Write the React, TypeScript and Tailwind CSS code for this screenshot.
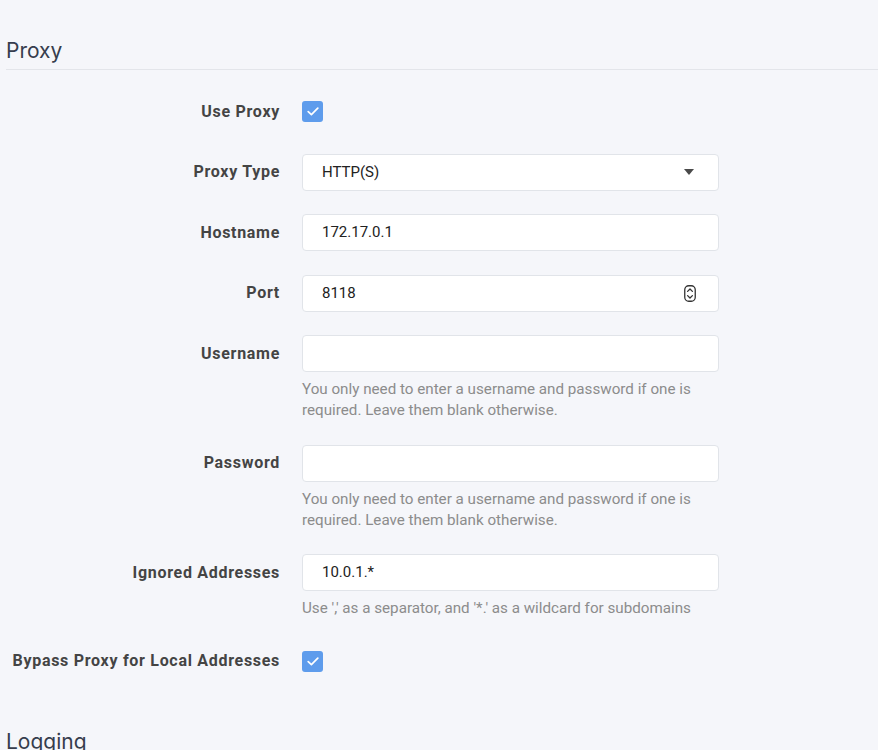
import React from 'react';

const help = 'You only need to enter a username and password if one is required. Leave them blank otherwise.';

export default function App() {
  return (
    <main className="min-h-screen bg-[#f5f6fa] font-['Roboto',sans-serif] text-[15px]">
      {/* Proxy */}
      <h2 className="ml-[6px] border-b border-[#e3e5ea] pt-[37px] pb-[4px] font-['Inter',sans-serif] text-[21px] leading-[28px] text-[#363d4d]">
        Proxy
      </h2>

      <div className="mt-[23px] flex flex-col gap-[23.5px]">
        <Row label="Use Proxy">
          <Checkbox />
        </Row>
        <Row label="Proxy Type">
          <Field>
            <span className="flex-1">HTTP(S)</span>
            <svg width="10" height="6" viewBox="0 0 10 6" className="mr-[5px]">
              <path d="M0 0h10L5 6z" fill="#4a4a4a" />
            </svg>
          </Field>
        </Row>
        <Row label="Hostname">
          <Field>172.17.0.1</Field>
        </Row>
        <Row label="Port">
          <Field>
            <span className="flex-1">8118</span>
            <svg width="12" height="17" viewBox="0 0 12 17" className="mr-[3px]">
              <rect x="0.75" y="0.75" width="10.5" height="15.5" rx="4" fill="none" stroke="#333" strokeWidth="1.3" />
              <path d="M3.6 6.4L6 4l2.4 2.4M3.6 10.6L6 13l2.4-2.4" fill="none" stroke="#333" strokeWidth="1.3" strokeLinecap="round" strokeLinejoin="round" />
            </svg>
          </Field>
        </Row>
        <Row label="Username" note={help}>
          <Field />
        </Row>
        <Row label="Password" note={help}>
          <Field />
        </Row>
        <Row label="Ignored Addresses" note="Use ',' as a separator, and '*.' as a wildcard for subdomains">
          <Field>10.0.1.*</Field>
        </Row>
        <Row label="Bypass Proxy for Local Addresses">
          <Checkbox />
        </Row>
      </div>

      {/* Logging */}
      <h2 className="ml-[6px] mt-[48px] font-['Inter',sans-serif] text-[21px] leading-[28px] text-[#363d4d]">
        Logging
      </h2>
    </main>
  );
}

function Row({ label, note, children }: { label: string; note?: string; children: React.ReactNode }) {
  return (
    <div className="flex gap-[22px]">
      <label className="flex h-[37px] w-[280px] shrink-0 items-center justify-end text-[16px] font-bold tracking-[0.7px] text-[#444]">
        {label}
      </label>
      <div className="w-[417px]">
        {children}
        {note && <p className="mt-[7px] text-[15.2px] leading-[21px] text-[#8c8c8c]">{note}</p>}
      </div>
    </div>
  );
}

function Field({ children }: { children?: React.ReactNode }) {
  return (
    <div className="flex h-[37px] items-center rounded-[4px] border border-[#e1e4e9] bg-white px-[19px] text-[#222]">
      {children}
    </div>
  );
}

function Checkbox() {
  return (
    <div className="flex h-[37px] items-center">
      <span className="flex h-[21px] w-[21px] items-center justify-center rounded-[3px] bg-[#5e9cec]">
        <svg width="12" height="9" viewBox="0 0 12 9">
          <path d="M1.2 4.6l3.2 3 6.4-6.4" fill="none" stroke="#fff" strokeWidth="1.7" strokeLinecap="round" strokeLinejoin="round" />
        </svg>
      </span>
    </div>
  );
}
